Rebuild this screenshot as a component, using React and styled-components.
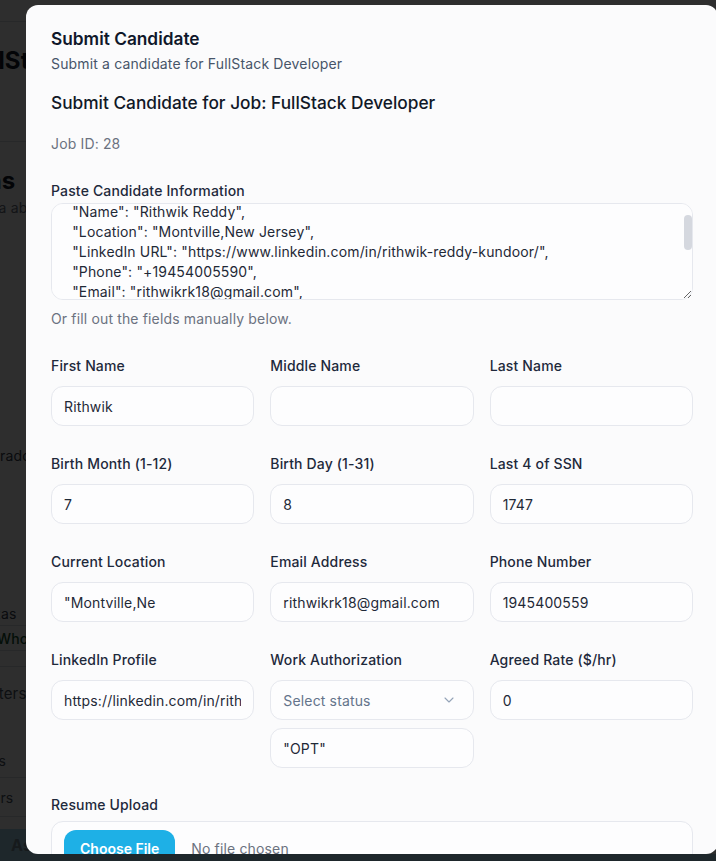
import React, { useEffect, useRef } from 'react';
import styled, { createGlobalStyle } from 'styled-components';
import { ChevronDown } from 'lucide-react';

const GlobalStyle = createGlobalStyle`
  * {
    box-sizing: border-box;
  }
  html, body {
    margin: 0;
    padding: 0;
    height: 100%;
    overflow: hidden;
  }
  body {
    font-family: Inter, "Noto Sans", sans-serif;
    letter-spacing: 0.15px;
    background: #ffffff;
  }
`;

/* page behind the dialog */

const Page = styled.div`
  height: 861px;
  display: flex;
  flex-direction: column;
  background: #ffffff;
  overflow: hidden;
`;

const BgRow = styled.div`
  height: ${(p) => p.$h}px;
  flex-shrink: 0;
  display: flex;
  align-items: center;
  border-bottom: ${(p) => (p.$line ? '1px solid #d9dde3' : 'none')};
  background: ${(p) => p.$bg || 'transparent'};
`;

const BgText = styled.span`
  margin-left: ${(p) => p.$shift}px;
  white-space: nowrap;
  font-size: ${(p) => p.$size || 14}px;
  font-weight: ${(p) => p.$weight || 400};
  color: ${(p) => p.$color || '#374151'};
`;

const Overlay = styled.div`
  position: fixed;
  inset: 0;
  background: rgba(0, 0, 0, 0.82);
`;

/* dialog */

const Dialog = styled.div`
  position: fixed;
  top: 5px;
  left: 26px;
  width: 692px;
  height: 849px;
  padding: 20px 25px 24px;
  background: #fbfbfc;
  border-radius: 12px;
  overflow-y: auto;
  scrollbar-width: none;
  display: flex;
  flex-direction: column;
`;

const Title = styled.h2`
  margin: 0;
  font-size: 17.3px;
  line-height: 28px;
  font-weight: 600;
  letter-spacing: 0;
  color: #0f172a;
`;

const Subtitle = styled.p`
  margin: 0;
  font-size: 14px;
  line-height: 22px;
  color: #475569;
`;

const Heading = styled.h3`
  margin: 14px 0 0;
  font-size: 17.3px;
  line-height: 28px;
  font-weight: 500;
  letter-spacing: 0;
  color: #111827;
`;

const Muted = styled.p`
  margin: ${(p) => p.$mt}px 0 0;
  font-size: 14px;
  line-height: 20px;
  color: #6b7280;
`;

const Field = styled.div`
  display: flex;
  flex-direction: column;
  gap: ${(p) => p.$gap}px;
  margin-top: ${(p) => p.$mt || 0}px;
`;

const Label = styled.label`
  font-size: 14px;
  line-height: 20px;
  font-weight: 500;
  color: #1e293b;
`;

const PasteBox = styled.div`
  position: relative;
`;

const PasteArea = styled.textarea`
  display: block;
  width: 100%;
  height: 97px;
  padding: 8px 12px;
  border: 1px solid #e6e8ee;
  border-radius: 12px;
  background: #fdfdfe;
  font-family: inherit;
  font-size: 14px;
  line-height: 20px;
  letter-spacing: 0.15px;
  color: #1f2937;
  white-space: pre;
  overflow: auto;
  outline: none;

  &::-webkit-scrollbar {
    width: 8px;
  }
  &::-webkit-scrollbar-track {
    background: transparent;
  }
  &::-webkit-scrollbar-thumb {
    background: #d5d8df;
    border-radius: 4px;
  }
`;

/* the scroll thumb drawn over the textarea's right edge */
const ScrollThumb = styled.span`
  position: absolute;
  top: 12px;
  right: 1px;
  width: 8px;
  height: 35px;
  border-radius: 4px;
  background: #d5d8df;
  pointer-events: none;
`;

const Grid = styled.div`
  display: grid;
  grid-template-columns: repeat(3, 1fr);
  gap: 28px 16px;
  margin-top: 27px;
`;

const Stack = styled.div`
  display: flex;
  flex-direction: column;
  gap: 8px;
`;

const Input = styled.input`
  width: 100%;
  height: 40px;
  padding: 0 12px;
  border: 1px solid #e6e8ee;
  border-radius: 12px;
  background: #fdfdfe;
  font-family: inherit;
  font-size: 14px;
  letter-spacing: 0.15px;
  color: #1f2937;
  outline: none;
`;

const SelectTrigger = styled.button`
  width: 100%;
  height: 40px;
  padding: 0 16px 0 12px;
  display: flex;
  align-items: center;
  justify-content: space-between;
  border: 1px solid #e6e8ee;
  border-radius: 12px;
  background: #fdfdfe;
  font-family: inherit;
  font-size: 14px;
  letter-spacing: 0.15px;
  color: #64748b;
  cursor: pointer;

  svg {
    color: #94a3b8;
  }
`;

const FileInput = styled.input`
  width: 100%;
  padding: 8px 12px;
  border: 1px solid #e6e8ee;
  border-radius: 12px;
  background: #fdfdfe;
  font-family: inherit;
  font-size: 14px;
  letter-spacing: 0.15px;
  color: #6b7280;

  &::file-selector-button {
    height: 36px;
    margin-right: 16px;
    padding: 0 16px;
    border: none;
    border-radius: 12px;
    background: #1eb0e6;
    color: #ffffff;
    font-family: inherit;
    font-size: 14px;
    font-weight: 600;
    cursor: pointer;
  }
`;

const Actions = styled.div`
  display: flex;
  justify-content: flex-end;
  gap: 8px;
  margin-top: 24px;
`;

const Button = styled.button`
  height: 40px;
  padding: 0 16px;
  border-radius: 12px;
  border: 1px solid ${(p) => (p.$primary ? '#1eb0e6' : '#e6e8ee')};
  background: ${(p) => (p.$primary ? '#1eb0e6' : '#ffffff')};
  color: ${(p) => (p.$primary ? '#ffffff' : '#1e293b')};
  font-family: inherit;
  font-size: 14px;
  font-weight: 600;
`;

const pasted = `{
  "Name": "Rithwik Reddy",
  "Location": "Montville,New Jersey",
  "LinkedIn URL": "https://www.linkedin.com/in/rithwik-reddy-kundoor/",
  "Phone": "+19454005590",
  "Email": "rithwikrk18@gmail.com",
  "Work Authorization": "OPT",
  "Birth Month": "7",
  "Birth Day": "8",
  "Last 4 SSN": "1747",
  "Rate": "0"
}`;

const fields = [
  { label: 'First Name', value: 'Rithwik' },
  { label: 'Middle Name', value: '' },
  { label: 'Last Name', value: '' },
  { label: 'Birth Month (1-12)', value: '7' },
  { label: 'Birth Day (1-31)', value: '8' },
  { label: 'Last 4 of SSN', value: '1747' },
  { label: 'Current Location', value: '"Montville,Ne' },
  { label: 'Email Address', value: 'rithwikrk18@gmail.com' },
  { label: 'Phone Number', value: '1945400559' },
  { label: 'LinkedIn Profile', value: 'https://linkedin.com/in/rithwik-reddy-kundoor' },
];

const Background = () => (
  <Page>
    <BgRow $h={22} $line />
    <BgRow $h={76}>
      <BgText $shift={-37} $size={24} $weight={700} $color="#111827">FullStack Developer</BgText>
    </BgRow>
    <BgRow $h={44} $line />
    <BgRow $h={24} />
    <BgRow $h={28}>
      <BgText $shift={-137} $size={24} $weight={700} $color="#111827">Submissions</BgText>
    </BgRow>
    <BgRow $h={26}>
      <BgText $shift={-23} $color="#6b7280">data about this job</BgText>
    </BgRow>
    <BgRow $h={225} />
    <BgRow $h={20}>
      <BgText $shift={-31}>Colorado</BgText>
    </BgRow>
    <BgRow $h={136} />
    <BgRow $h={25} $line>
      <BgText $shift={-23}>Texas</BgText>
    </BgRow>
    <BgRow $h={25} $line>
      <BgText $shift={-3} $weight={500} $color="#14532d">Who</BgText>
    </BgRow>
    <BgRow $h={16} $line />
    <BgRow $h={53}>
      <BgText $shift={-47} $size={15} $color="#4b5563">Recruiters</BgText>
    </BgRow>
    <BgRow $h={24} />
    <BgRow $h={34} $line>
      <BgText $shift={-27} $color="#4b5563">Jobs</BgText>
    </BgRow>
    <BgRow $h={39} $line>
      <BgText $shift={-26} $color="#4b5563">Users</BgText>
    </BgRow>
    <BgRow $h={12} />
    <BgRow $h={32} $bg="#a6d8ef">
      <BgText $shift={11} $size={16} $weight={700} $color="#7b8f9b">Ask</BgText>
    </BgRow>
  </Page>
);

const App = () => {
  const pasteRef = useRef(null);

  useEffect(() => {
    if (pasteRef.current) pasteRef.current.scrollTop = 30;
  }, []);

  return (
    <>
      <GlobalStyle />
      <Background />
      <Overlay />
      <Dialog role="dialog">
        <Title>Submit Candidate</Title>
        <Subtitle>Submit a candidate for FullStack Developer</Subtitle>
        <Heading>Submit Candidate for Job: FullStack Developer</Heading>
        <Muted $mt={17}>Job ID: 28</Muted>

        <Field $gap={2} $mt={27}>
          <Label>Paste Candidate Information</Label>
          <PasteBox>
            <PasteArea ref={pasteRef} defaultValue={pasted} spellCheck={false} />
            <ScrollThumb />
          </PasteBox>
        </Field>
        <Muted $mt={9}>Or fill out the fields manually below.</Muted>

        <Grid>
          {fields.map((f) => (
            <Field key={f.label} $gap={10}>
              <Label>{f.label}</Label>
              <Input type="text" defaultValue={f.value} />
            </Field>
          ))}
          <Field $gap={10}>
            <Label>Work Authorization</Label>
            <Stack>
              <SelectTrigger type="button">
                <span>Select status</span>
                <ChevronDown size={16} strokeWidth={1.6} />
              </SelectTrigger>
              <Input type="text" defaultValue={'"OPT"'} />
            </Stack>
          </Field>
          <Field $gap={10}>
            <Label>Agreed Rate ($/hr)</Label>
            <Input type="number" defaultValue={0} />
          </Field>
        </Grid>

        <Field $gap={6} $mt={27}>
          <Label>Resume Upload</Label>
          <FileInput type="file" />
        </Field>

        <Actions>
          <Button type="button">Cancel</Button>
          <Button type="button" $primary>Submit Candidate</Button>
        </Actions>
      </Dialog>
    </>
  );
};

export default App;
